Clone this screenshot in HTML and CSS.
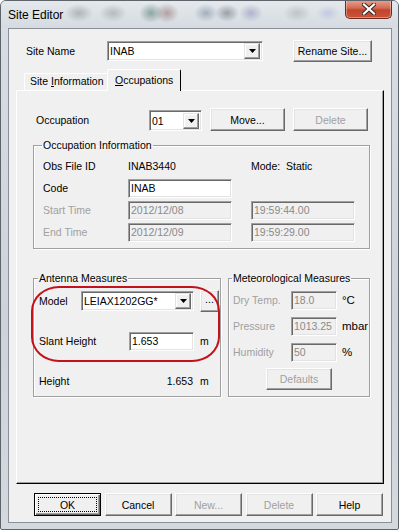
FILE: index.html
```html
<!DOCTYPE html>
<html lang="en">
<head>
    <meta charset="UTF-8">
    <meta name="viewport" content="width=device-width, initial-scale=1.0">
    <title>Site Editor</title>
    <link rel="stylesheet" href="styles.css">
</head>
<body>
    <div class="window">
        <div class="titlebar">
            <span class="title">Site Editor</span>
            <div class="close-btn">
                <svg width="14" height="12" viewBox="0 0 14 12">
                    <path d="M2 1.5 L12 10.5 M12 1.5 L2 10.5" stroke="#3a2a26" stroke-width="4.2" stroke-linecap="square"/>
                    <path d="M2 1.5 L12 10.5 M12 1.5 L2 10.5" stroke="#fff" stroke-width="2.2" stroke-linecap="square"/>
                </svg>
            </div>
        </div>

        <div class="client">
            <!-- site name row -->
            <div class="site-row">
                <span class="site-label">Site Name</span>
                <div class="combo site-combo">
                    <span class="combo-text">INAB</span>
                    <span class="drop-btn"><svg width="7" height="4" viewBox="0 0 7 4"><path d="M0 0H7L3.5 4Z" fill="#000"/></svg></span>
                </div>
                <div class="btn rename-btn">Rename Site...</div>
            </div>

            <div class="tabs">
                <div class="tab">Site <u>I</u>nformation</div>
                <div class="tab active"><u>O</u>ccupations</div>
            </div>

            <div class="panel">
                <div class="occ-row">
                    <span class="occ-label">Occupation</span>
                    <div class="combo occ-combo">
                        <span class="combo-text">01</span>
                        <span class="drop-btn"><svg width="7" height="4" viewBox="0 0 7 4"><path d="M0 0H7L3.5 4Z" fill="#000"/></svg></span>
                    </div>
                    <div class="btn occ-btn">Move...</div>
                    <div class="btn occ-btn disabled">Delete</div>
                </div>

                <fieldset class="group occ-info">
                    <legend>Occupation Information</legend>
                    <div class="info-grid">
                        <span>Obs File ID</span>
                        <span>INAB3440</span>
                        <span class="mode">Mode:  Static</span>

                        <span>Code</span>
                        <div class="field">INAB</div>
                        <span></span>

                        <span class="dim">Start Time</span>
                        <div class="field off">2012/12/08</div>
                        <div class="field off">19:59:44.00</div>

                        <span class="dim">End Time</span>
                        <div class="field off">2012/12/09</div>
                        <div class="field off">19:59:29.00</div>
                    </div>
                </fieldset>

                <div class="measures">
                    <fieldset class="group antenna">
                        <legend>Antenna Measures</legend>
                        <div class="model-row">
                            <span class="model-label">Model</span>
                            <div class="combo model-combo">
                                <span class="combo-text">LEIAX1202GG*</span>
                                <span class="drop-btn"><svg width="7" height="4" viewBox="0 0 7 4"><path d="M0 0H7L3.5 4Z" fill="#000"/></svg></span>
                            </div>
                            <div class="btn dots-btn">...</div>
                        </div>
                        <div class="height-grid">
                            <span>Slant Height</span>
                            <div class="field">1.653</div>
                            <span>m</span>

                            <span>Height</span>
                            <span class="height-val">1.653</span>
                            <span>m</span>
                        </div>
                        <!-- red annotation ring -->
                        <div class="ring"></div>
                    </fieldset>

                    <fieldset class="group meteo">
                        <legend>Meteorological Measures</legend>
                        <div class="meteo-grid">
                            <span class="dim">Dry Temp.</span>
                            <div class="field off">18.0</div>
                            <span class="unit">°C</span>

                            <span class="dim">Pressure</span>
                            <div class="field off">1013.25</div>
                            <span class="unit">mbar</span>

                            <span class="dim">Humidity</span>
                            <div class="field off">50</div>
                            <span class="unit">%</span>
                        </div>
                        <div class="btn defaults-btn disabled">Defaults</div>
                    </fieldset>
                </div>
            </div>

            <div class="dialog-buttons">
                <div class="btn dlg-btn default"><span class="focus">OK</span></div>
                <div class="btn dlg-btn">Cancel</div>
                <div class="btn dlg-btn disabled">New...</div>
                <div class="btn dlg-btn disabled">Delete</div>
                <div class="btn dlg-btn">Help</div>
            </div>
        </div>
    </div>
</body>
</html>
```

FILE: styles.css
```css
* {
    margin: 0;
    padding: 0;
    box-sizing: border-box;
}

body {
    font-family: "Liberation Sans", Arial, sans-serif;
    font-size: 10.5px;
    color: #000;
    background: #fff;
}

.window {
    width: 399px;
    height: 530px;
    border: 1px solid #5d646c;
    border-radius: 6px 6px 2px 2px;
    background: linear-gradient(#d9dee4, #cdd3d9 60%, #d4d9de);
    display: flex;
    flex-direction: column;
    overflow: hidden;
}

.titlebar {
    height: 27px;
    display: flex;
    justify-content: space-between;
    align-items: flex-start;
    padding-left: 7px;
    background:
        radial-gradient(ellipse 14px 9px at 78px 12px, rgba(90, 95, 100, 0.35), transparent),
        radial-gradient(ellipse 14px 9px at 112px 12px, rgba(90, 95, 100, 0.3), transparent),
        radial-gradient(ellipse 12px 10px at 150px 12px, rgba(40, 90, 80, 0.45), transparent),
        radial-gradient(ellipse 12px 10px at 166px 12px, rgba(110, 60, 60, 0.4), transparent),
        radial-gradient(ellipse 12px 9px at 205px 12px, rgba(60, 80, 110, 0.35), transparent),
        radial-gradient(ellipse 12px 9px at 226px 12px, rgba(50, 60, 70, 0.4), transparent),
        radial-gradient(ellipse 12px 9px at 250px 12px, rgba(90, 90, 160, 0.35), transparent),
        radial-gradient(ellipse 14px 9px at 296px 12px, rgba(100, 105, 110, 0.25), transparent),
        radial-gradient(ellipse 12px 8px at 327px 12px, rgba(120, 130, 200, 0.25), transparent),
        linear-gradient(#e4e8ec, #d5dbe1);
}

.title {
    font-size: 12px;
    line-height: 14px;
    padding-top: 7px;
}

.close-btn {
    width: 47px;
    height: 19px;
    margin-top: -1px;
    margin-right: 6px;
    border: 1px solid #6e2a1e;
    border-top: none;
    border-radius: 0 0 5px 5px;
    background: linear-gradient(#e9a392, #d36a52 45%, #c2432a 55%, #c9553a);
    box-shadow: inset 0 0 0 1px rgba(255, 255, 255, 0.35);
    display: flex;
    justify-content: center;
    align-items: center;
}

.client {
    width: 384px;
    height: 495px;
    margin-left: 7px;
    border: 1px solid #8a9097;
    background: #f0f0f0;
}

/* classic 3D edges */
.btn {
    display: flex;
    justify-content: center;
    align-items: center;
    flex-shrink: 0;
    background: #f0f0f0;
    border: 1px solid;
    border-color: #fff #696969 #696969 #fff;
    box-shadow: inset -1px -1px #a0a0a0, inset 1px 1px #e3e3e3;
}

.btn.disabled {
    color: #a0a0a0;
}

.field,
.combo {
    flex-shrink: 0;
    background: #fff;
    border: 1px solid;
    border-color: #a0a0a0 #fff #fff #a0a0a0;
    box-shadow: inset 1px 1px #696969, inset -1px -1px #e3e3e3;
    padding-left: 2px;
    display: flex;
    align-items: center;
    white-space: nowrap;
    overflow: hidden;
}

.field.off {
    background: #f0f0f0;
    color: #8a8a8a;
}

.combo {
    justify-content: space-between;
    padding-right: 2px;
}

.drop-btn {
    width: 16px;
    height: 16px;
    flex-shrink: 0;
    display: flex;
    justify-content: center;
    align-items: center;
    background: #f0f0f0;
    border: 1px solid;
    border-color: #e3e3e3 #696969 #696969 #e3e3e3;
    box-shadow: inset -1px -1px #a0a0a0, inset 1px 1px #fff;
}

.dim {
    color: #a0a0a0;
}

/* site name row */
.site-row {
    display: flex;
    align-items: center;
    height: 22px;
    margin-top: 11px;
    padding-left: 17px;
}

.site-label {
    width: 81px;
    flex-shrink: 0;
}

.site-combo {
    width: 156px;
    height: 20px;
}

.rename-btn {
    width: 79px;
    height: 22px;
    margin-left: 30px;
}

/* tabs */
.tabs {
    display: flex;
    align-items: flex-end;
    height: 21px;
    margin-top: 7px;
    padding-left: 15px;
}

.tab {
    width: 84px;
    height: 17px;
    padding-left: 5px;
    border: 1px solid;
    border-color: #fff #696969 transparent #fff;
    border-bottom: none;
    border-radius: 2px 2px 0 0;
    line-height: 15px;
    white-space: nowrap;
}

.tab.active {
    width: 74px;
    height: 22px;
    margin-bottom: -1px;
    margin-left: -1px;
    padding-left: 7px;
    background: #f0f0f0;
    border-right-color: #000;
    position: relative;
    z-index: 1;
    line-height: 20px;
}

/* tab page */
.panel {
    width: 368px;
    height: 394px;
    margin-left: 7px;
    border: 1px solid;
    border-color: #fff #000 #000 #fff;
    box-shadow: inset -1px -1px #a0a0a0;
}

.occ-row {
    display: flex;
    align-items: flex-end;
    height: 23px;
    margin-top: 17px;
    padding-left: 19px;
}

.occ-label {
    width: 113px;
    flex-shrink: 0;
    align-self: center;
}

.occ-combo {
    width: 53px;
    height: 21px;
}

.occ-btn {
    width: 75px;
    height: 23px;
    margin-left: 8px;
}

/* group boxes */
.group {
    border: 1px solid #a0a0a0;
    box-shadow: 1px 1px #fff, inset 1px 1px #fff;
    min-width: 0;
}

.group legend {
    padding: 0 1px;
    margin-left: -1px;
    line-height: 12px;
}

.occ-info {
    width: 337px;
    height: 110px;
    margin: 8px 0 0 16px;
    padding: 4px 0 0 9px;
}

.info-grid {
    display: grid;
    grid-template-columns: 85px 123px 104px;
    grid-auto-rows: 22px;
    align-items: center;
    justify-items: start;
}

.info-grid .field {
    width: 104px;
    height: 19px;
}

.mode {
    white-space: pre;
}

.measures {
    display: flex;
    margin: 23px 0 0 16px;
    align-items: flex-start;
}

.antenna {
    width: 188px;
    height: 125px;
    padding: 6px 0 0 5px;
    position: relative;
    flex-shrink: 0;
}

.model-row {
    display: flex;
    align-items: center;
    height: 22px;
}

.model-label {
    width: 42px;
    flex-shrink: 0;
}

.model-combo {
    width: 113px;
    height: 20px;
}

.dots-btn {
    width: 19px;
    height: 22px;
    margin-left: 6px;
    padding-bottom: 4px;
}

.height-grid {
    display: grid;
    grid-template-columns: 84px 65px auto;
    grid-auto-rows: 22px;
    row-gap: 18px;
    column-gap: 6px;
    align-items: center;
    margin-top: 18px;
}

.height-grid .field {
    height: 19px;
}

.height-val {
    text-align: right;
    padding-right: 1px;
}

.ring {
    position: absolute;
    left: -3px;
    top: 2px;
    width: 189px;
    height: 76px;
    border: 2px solid #c3121c;
    border-radius: 28px / 25px;
}

.meteo {
    width: 142px;
    height: 125px;
    margin-left: 7px;
    padding: 3px 0 0 4px;
    flex-shrink: 0;
}

.meteo-grid {
    display: grid;
    grid-template-columns: 53px 46px auto;
    grid-auto-rows: 26px;
    column-gap: 5px;
    align-items: center;
}

.meteo-grid .field {
    width: 46px;
    height: 19px;
}

.unit {
    font-size: 11.5px;
}

.defaults-btn {
    width: 66px;
    height: 22px;
    margin: 3px 0 0 33px;
}

/* bottom buttons */
.dialog-buttons {
    display: flex;
    gap: 3.5px;
    margin-top: 9px;
    padding-left: 25px;
}

.dlg-btn {
    width: 67px;
    height: 23px;
}

.dlg-btn.default {
    border: 1px solid #000;
    box-shadow: inset 1px 1px #fff, inset -1px -1px #696969, inset -2px -2px #a0a0a0;
    padding: 3px;
}

.focus {
    flex: 1;
    align-self: stretch;
    display: flex;
    justify-content: center;
    align-items: center;
    border: 1px dotted #000;
}
```
